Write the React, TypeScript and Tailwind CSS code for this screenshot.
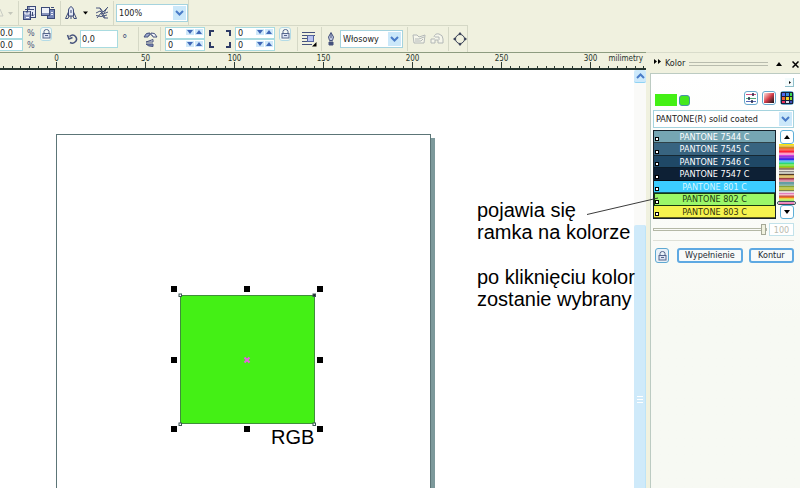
import React, { useState } from 'react';

const swatches = [
  { name: 'PANTONE 7544 C', row: 'bg-[#76a6b3] text-white' },
  { name: 'PANTONE 7545 C', row: 'bg-[#386480] text-white' },
  { name: 'PANTONE 7546 C', row: 'bg-[#1f4866] text-white' },
  { name: 'PANTONE 7547 C', row: 'bg-[#0d2035] text-white' },
  { name: 'PANTONE 801 C', row: 'bg-[#3bcdff] text-[#d6f6ff]' },
  { name: 'PANTONE 802 C', row: 'bg-[#9bf768] text-[#1c3a10]' },
  { name: 'PANTONE 803 C', row: 'bg-[#f5f34e] text-[#33330c]' },
];

const stripColors = [
  '#f5e60a', '#e8b820', '#c88a28', '#f06a20', '#f23a2a', '#ff2038', '#f6406a', '#ff9bd0', '#d040e0', '#7a18c8',
  '#5a10e0', '#2a30f0', '#3a90f0', '#40d8c0', '#30d870', '#60e040', '#80d820', '#a8b020', '#604030', '#e8e4d8',
  '#807878', '#d8d8cc', '#503828', '#c8a040', '#e0c060', '#a04040', '#b83860', '#d8a0a8', '#60a0a0', '#3c8088',
  '#90b8a0', '#88a030', '#a8b828', '#c8c840', '#707840', '#e8e8e0', '#e080c0', '#f8b0d0', '#c04030', '#f07820',
  '#e8d020', '#a0f060', '#40f040', '#f070c0', '#ff3080',
];

const rulerMarks = [0, 50, 100, 150, 200, 250, 300];

const Chevron: React.FC<{ up?: boolean }> = ({ up }) => (
  <svg width="9" height="6" viewBox="0 0 9 6" fill="none" stroke="#4a7cc8" strokeWidth="2">
    <path d={up ? 'M1 5 4.500 1.500 8 5' : 'M1 1 4.500 4.500 8 1'} />
  </svg>
);

const Sep: React.FC = () => <div className="h-6 w-px shrink-0 bg-[#d5d8c6]" />;

const Combo: React.FC<{ label: string; value: string; className: string }> = ({ label, value, className }) => (
  <div className={`relative flex h-[18px] shrink-0 border border-[#a5d3de] bg-white ${className}`}>
    <select aria-label={label} className="w-full appearance-none bg-transparent pl-0.5 leading-4 outline-none">
      <option>{value}</option>
    </select>
    <span className="pointer-events-none absolute inset-y-px right-px flex w-[13px] items-center justify-center bg-[#cbe8fa]">
      <Chevron />
    </span>
  </div>
);

const Arrow: React.FC<{ up?: boolean }> = ({ up }) => (
  <button aria-label={up ? 'Więcej' : 'Mniej'} className="flex h-[6px] w-[8px] items-center justify-center bg-[#cfe8fa]">
    <svg width="6" height="4" viewBox="0 0 6 4" fill="#4068b8">
      <path d={up ? 'M0 4 3 0 6 4z' : 'M0 0 3 4 6 0z'} />
    </svg>
  </button>
);

const Spin: React.FC<{ label: string }> = ({ label }) => (
  <div className="flex h-3 w-10 border border-[#a9dbe0] bg-white">
    <input aria-label={label} defaultValue="0" className="w-5 min-w-0 pl-0.5 leading-[10px] outline-none" />
    <div className="flex gap-px pt-px">
      <Arrow />
      <Arrow up />
    </div>
  </div>
);

const SpinPair: React.FC<{ label: string }> = ({ label }) => (
  <div className="flex shrink-0 flex-col">
    <Spin label={`${label} 1`} />
    <Spin label={`${label} 2`} />
  </div>
);

const LockIcon: React.FC = () => (
  <svg width="9" height="10" viewBox="0 0 9 10" fill="none" stroke="#56668c">
    <path d="M2 4.500V2.500Q2 .5 4.500 .5T7 2.500V4.500" />
    <rect x="1" y="4.500" width="7" height="4.500" fill="#dfe5f4" />
    <path d="M3 6.500h3" />
  </svg>
);

const LockButton: React.FC = () => (
  <button aria-label="Blokada" className="flex h-[14px] w-3 shrink-0 items-center justify-center self-start rounded-[3px] border border-[#b4dbe6] bg-[#f4f9f5]">
    <LockIcon />
  </button>
);

const TopBar: React.FC = () => (
  <div className="flex h-[25px] w-[189px] items-center border-r border-[#d5d8c6]">
    <svg width="14" height="14" viewBox="0 0 14 14" fill="none" className="shrink-0">
      <path d="M0 3 3 10H0" stroke="#c9ccc4" />
      <path d="M8 6h5l-2.500 3z" fill="#c4c7bb" />
    </svg>
    <div className="ml-1 mr-1">
      <Sep />
    </div>
    <button aria-label="Importuj" className="shrink-0">
      <svg width="14" height="14" viewBox="0 0 14 14" fill="none" stroke="#3c4a78">
        <rect x="4.500" y=".5" width="8" height="11" fill="#e5eaf6" />
        <path d="M6 3.500h5M9.500 6v4M8 8.500l1.500 1.500L11 8.500" />
        <rect x=".5" y="5.500" width="7" height="8" fill="#8894bd" />
        <path d="M2 5.500V8h4V5.500M3 11.500h3" stroke="#fff" />
        <path d="M2 3.500h4V1" />
      </svg>
    </button>
    <button aria-label="Eksportuj" className="ml-1 shrink-0">
      <svg width="15" height="14" viewBox="0 0 15 14" fill="none" stroke="#3c4a78">
        <rect x="6.500" y="3.500" width="7" height="9" fill="#7686b8" />
        <path d="M10 6.500h2M10 8.500h2" stroke="#eef1f8" />
        <rect x=".5" y="1.500" width="8" height="8" fill="#eef1f8" />
        <path d="M1 8h7" stroke="#8894bd" strokeWidth="2" />
        <path d="M10 1.500h3" />
      </svg>
    </button>
    <div className="ml-1 mr-1">
      <Sep />
    </div>
    <button aria-label="Uruchom" className="flex shrink-0 items-center gap-1.5">
      <svg width="12" height="14" viewBox="0 0 12 14" fill="none" stroke="#3c4a78">
        <path d="M3.500 10V4Q3.500 2 6 .5 8.500 2 8.500 4v6z" fill="#e3e8f5" />
        <path d="M3.500 6 .5 12.500H3l1-2.500M8.500 6l3 6.500H9L8 10M6 4v3M6 10v3" />
      </svg>
      <svg width="6" height="4" viewBox="0 0 6 4">
        <path d="M0 .5h5L2.500 3.500z" />
      </svg>
    </button>
    <button aria-label="Corel w sieci" className="ml-1.5 shrink-0">
      <svg width="14" height="14" viewBox="0 0 14 14" fill="none" stroke="#4a567e">
        <path d="M1 2h4l3 4 5-5M1 7l4-2 3 3 5-2M2 12l4-5 3 5h4M5 2l5 10M12 2 9 7M1 9.500l5 1 6-1.500" />
      </svg>
    </button>
    <div className="ml-1 mr-0.5">
      <Sep />
    </div>
    <Combo label="Powiększenie" value="100%" className="w-[72px]" />
  </div>
);

const PropertyBar: React.FC = () => (
  <div className="flex h-[27px] w-[468px] items-center border-r border-t border-[#d5d8c6]">
    <div className="flex shrink-0 flex-col">
      {['Skala pozioma', 'Skala pionowa'].map((l) => (
        <input key={l} aria-label={l} defaultValue="0.0" className="h-3 w-[23px] border border-l-0 border-[#a9dbe0] bg-white leading-[10px] outline-none" />
      ))}
    </div>
    <div className="ml-1 flex w-[13px] shrink-0 flex-col leading-3 text-[#4a567e]">
      <span>%</span>
      <span>%</span>
    </div>
    <div className="flex h-6 w-6 shrink-0">
      <LockButton />
    </div>
    <div className="flex shrink-0 items-center">
      <svg width="16" height="12" viewBox="0 0 16 12" fill="none" stroke="#46527c" strokeWidth="1.500">
        <path d="M5.500 3.500Q9 .5 11.500 3.500T11 9Q9 11 6 9.500M3.500 2l1.500 4 3.500-1.500" />
      </svg>
      <input aria-label="Kąt obrotu" defaultValue="0,0" className="h-[18px] w-[38px] border border-[#a9dbe0] bg-white pl-px outline-none" />
      <span className="ml-1 w-4 text-[12px] text-[#4a567e]">°</span>
    </div>
    <Sep />
    <svg width="15" height="20" viewBox="0 0 15 20" className="ml-1 shrink-0" stroke="#46527c">
      <path d="M1 8q2-5 6-4v2q-2 0-2 2z" fill="#9aa6cc" />
      <path d="M14 8Q12 3 8 4v2q2 0 2 2z" fill="#eef1f8" />
      <path d="M3 13l7-2.500V13z" fill="#eef1f8" />
      <path d="M3 15h7v2.500q-5 0-7-2.500z" fill="#7a89ba" />
    </svg>
    <div className="ml-0.5 mr-1">
      <Sep />
    </div>
    <SpinPair label="Zaokrąglenie lewe" />
    <svg width="22" height="18" viewBox="0 0 22 18" fill="none" stroke="#2e3b66" strokeWidth="2" className="mx-1 shrink-0">
      <path d="M1 6V1h4M17 1h4v5M1 12v5h4M17 17h4v-5" />
    </svg>
    <SpinPair label="Zaokrąglenie prawe" />
    <div className="ml-1 flex h-6 w-[18px] shrink-0">
      <LockButton />
    </div>
    <Sep />
    <button aria-label="Oblewanie tekstem" className="mx-1 shrink-0">
      <svg width="15" height="16" viewBox="0 0 15 16" stroke="#46527c">
        <path d="M0 1.500h13M0 4.500h5M0 7.500h5M0 10.500h5M0 13.500h10M11 4.500h2" />
        <rect x="5.500" y="4.500" width="6" height="6" fill="#b8c3f0" stroke="#5565a0" />
        <path d="M14.500 11v4.500H10z" fill="#000" stroke="none" />
      </svg>
    </button>
    <Sep />
    <svg width="10" height="14" viewBox="0 0 10 14" stroke="#46527c" className="mx-1 shrink-0">
      <path d="M5 .5 7.500 5 6.500 8.500h-3L2.500 5z" fill="#c3cbe4" />
      <path d="M5 1v5" />
      <path d="M3 10h4v3H3z" fill="#46527c" />
    </svg>
    <Combo label="Grubość konturu" value="Włosowy" className="w-[63px]" />
    <div className="ml-1 mr-1">
      <Sep />
    </div>
    <div className="flex shrink-0 gap-1 opacity-40">
      <svg width="14" height="12" viewBox="0 0 14 12" fill="#fff" stroke="#59637c">
        <path d="M1 2h4l2 2 6-2-1 8H2z" />
        <path d="M3 6h4l5-2M3 8h6l2-2" />
      </svg>
      <svg width="14" height="12" viewBox="0 0 14 12" fill="#fff" stroke="#59637c">
        <path d="M4 4q1-4 5-3t4 5v4H8V7H5v3H1V6h4" />
        <path d="M5 4h4v3" />
      </svg>
    </div>
    <div className="ml-1 mr-1">
      <Sep />
    </div>
    <button aria-label="Konwertuj na krzywe" className="shrink-0">
      <svg width="14" height="14" viewBox="0 0 14 14" fill="none" stroke="#3a4258">
        <circle cx="7" cy="7" r="4.500" />
        <path d="M7 0l2 2.500H5zM7 14l2-2.500H5zM0 7l2.500-2v4zM14 7l-2.500-2v4z" fill="#3a4258" stroke="none" />
      </svg>
    </button>
  </div>
);

const Ruler: React.FC = () => (
  <div className="h-[18px] overflow-hidden border-b-2 border-t border-b-[#26352f] border-t-[#8d9c80]">
    <svg width="646" height="15" viewBox="0 0 646 15" stroke="#2e3c34" fill="#26332c">
      {Array.from({ length: 73 }, (_, i) => (
        <path key={i} d={`M${Math.round(56 + (i - 6) * 8.9) + 0.5} 13v2`} />
      ))}
      {rulerMarks.map((m) => (
        <g key={m}>
          <path d={`M${Math.round(56 + m * 1.78) + 0.5} 9v6`} />
          <text x={56.5 + m * 1.78} y="8" textAnchor="middle" fontSize="8" stroke="none">{m}</text>
        </g>
      ))}
      <text x="643" y="8" textAnchor="end" fontSize="8" stroke="none">milimetry</text>
    </svg>
  </div>
);

const handles = [
  'left-[171px] top-[216px]', 'left-[244px] top-[216px]', 'left-[317px] top-[216px]',
  'left-[171px] top-[287px]', 'left-[317px] top-[287px]',
  'left-[171px] top-[356px]', 'left-[244px] top-[356px]', 'left-[317px] top-[356px]',
];

const Canvas: React.FC = () => (
  <div className="relative flex-1 bg-white">
    <div className="absolute bottom-0 left-[431px] top-[68px] w-[4px] bg-[#7d999b]" />
    <div className="absolute bottom-0 left-[56px] top-[64px] w-[375px] border border-b-0 border-[#5c7577] bg-white" />
    <div className="absolute left-[180px] top-[225px] h-[129px] w-[135px] border border-[#3f8f3a] bg-[#44f015]" />
    {handles.map((h) => (
      <div key={h} className={`absolute size-1.5 bg-black ${h}`} />
    ))}
    <svg width="140" height="134" viewBox="0 0 140 134" className="absolute left-[178px] top-[223px]" fill="#fff" stroke="#3c5456">
      <rect x="1" y="1" width="2.500" height="2.500" />
      <rect x="135" y="1" width="2.500" height="2.500" fill="#222" />
      <rect x="1" y="130" width="2.500" height="2.500" />
      <rect x="135" y="130" width="2.500" height="2.500" />
      <path d="M66.500 64.500l5 5M71.500 64.500l-5 5" stroke="#e660e0" strokeWidth="2" />
    </svg>
    <p className="absolute left-[271px] top-[356px] text-[20px] leading-[22px]">RGB</p>
    <div className="absolute left-[477px] top-[129px] z-10 whitespace-nowrap text-[20px] leading-[22px]">
      <p>pojawia się<br />ramka na kolorze</p>
      <p className="mt-[23px]">po kliknięciu kolor<br />zostanie wybrany</p>
    </div>
    <svg width="72" height="20" viewBox="0 0 72 20" className="absolute left-[587px] top-[126px] z-20" stroke="#3b3b3b">
      <path d="M0 18.500 71 2" />
    </svg>
  </div>
);

const ScrollBar: React.FC = () => (
  <div className="flex w-3 flex-col bg-[#fafaf8]">
    <button aria-label="W górę" className="flex h-[13px] items-center justify-center rounded-[2px] border-b border-[#8fd3f4] bg-[#cde9fb]">
      <Chevron up />
    </button>
    <div className="h-[142px]" />
    <div className="flex flex-1 items-center justify-center rounded-t-[2px] border-r border-[#bde4f8] bg-[#cfeafa]">
      <div className="mt-[86px] flex w-[6px] flex-col gap-0.5">
        <div className="h-px bg-white" />
        <div className="h-px bg-white" />
        <div className="h-px bg-white" />
      </div>
    </div>
  </div>
);

const modeButton = 'flex size-[14px] items-center justify-center rounded-[3px] border border-[#68a8cc] bg-white';
const xpButton = 'flex items-center justify-center rounded-[3px] border-2 border-[#5ea9e2] bg-[#f8fafa] text-[#1d2b33]';

const ColorDocker: React.FC = () => {
  const [selected, setSelected] = useState('PANTONE 802 C');
  const [tint, setTint] = useState(100);

  return (
    <aside className="flex w-[154px] shrink-0 flex-col border-t border-[#d9dccb] pl-1">
      <header className="flex h-5 items-center gap-1 pl-1 pr-px pt-0.5">
        <svg width="7" height="5" viewBox="0 0 7 5" className="-mt-1.5 shrink-0">
          <path d="M0 0l3 2.500L0 5zM4 0l3 2.500L4 5z" />
        </svg>
        <h2>Kolor</h2>
        <div className="h-[4px] flex-1 border-y border-[#b9bcae]" />
        <button aria-label="Zwiń" className="pl-1 pr-0.5">
          <svg width="6" height="4" viewBox="0 0 6 4"><path d="M0 4l3-4 3 4z" /></svg>
        </button>
        <button aria-label="Zamknij" className="pl-1">
          <svg width="7" height="7" viewBox="0 0 7 7" stroke="#000" strokeWidth="1.500"><path d="M.5 .5l6 6M6.500 .5l-6 6" /></svg>
        </button>
      </header>

      <div className="flex flex-1 flex-col border-l border-t border-[#bccbc2] bg-gradient-to-b from-white to-[#f7f9f3] to-60% pl-0.5 pr-1.5">
        <div className="flex justify-end pt-1">
          <button aria-label="Opcje" className="flex size-[9px] items-center justify-center border-b border-r border-[#8fbfcb] bg-[#f4fbfc]">
            <svg width="3" height="3" viewBox="0 0 3 3"><path d="M1 0l2 1.500L1 3z" /></svg>
          </button>
        </div>
        <div className="mt-[3px] flex items-center gap-1">
          <div className="mt-1 flex flex-1 items-center gap-0.5 pl-0.5">
            <div className="h-3 w-[22px] bg-[#44f015]" />
            <button aria-label="Kolor bieżący" className="size-[11px] rounded-[3px] border border-[#4791a8] bg-[#44e81c]" />
          </div>
          <button aria-label="Suwaki kolorów" className={modeButton}>
            <svg width="12" height="12" viewBox="0 0 12 12" fill="none">
              <path d="M1 2.500h10" stroke="#d05080" />
              <path d="M1 6.500h10" stroke="#52a878" />
              <path d="M1 9.500h10" stroke="#5868b8" />
              <path d="M8 1v3M4 5v3M7 8v3" stroke="#222a44" strokeWidth="1.500" />
            </svg>
          </button>
          <button aria-label="Przeglądarki kolorów" className={modeButton}>
            <span className="size-[10px] bg-gradient-to-br from-[#f8dce0] via-[#d53b4a] to-[#151015]" />
          </button>
          <button aria-label="Palety kolorów" className={modeButton}>
            <svg width="12" height="12" viewBox="0 0 12 12">
              <rect width="12" height="12" fill="#18203a" />
              <path d="M1 1h3v3H1z" fill="#5068f0" />
              <path d="M5 1h3v3H5z" fill="#3890e0" />
              <path d="M9 1h2v3H9z" fill="#38d850" />
              <path d="M1 5h3v3H1z" fill="#f06030" />
              <path d="M5 5h3v3H5z" fill="#f0d820" />
              <path d="M9 5h2v3H9z" fill="#88e030" />
              <path d="M1 9h3v2H1z" fill="#f03060" />
              <path d="M5 9h3v2H5z" fill="#e0e0f0" />
              <path d="M9 9h2v2H9z" fill="#4050c0" />
            </svg>
          </button>
        </div>

        <div className="mt-1 flex flex-col">
          <Combo label="Paleta" value="PANTONE(R) solid coated" className="w-full" />
        </div>

        <div className="mt-0.5 flex gap-[3px]">
          <ul className="grid h-[89px] flex-1 auto-rows-fr border border-[#16222b]">
            {swatches.map((s) => (
              <li key={s.name} className="flex min-h-0">
                <button
                  onClick={() => setSelected(s.name)}
                  className={`relative w-full overflow-hidden border-b border-black/60 leading-3 ${s.row} ${selected === s.name ? 'outline -outline-offset-1 outline-[#173a10]' : ''}`}
                >
                  {s.name}
                  <span className="absolute bottom-px left-px size-1 border border-black bg-white" />
                </button>
              </li>
            ))}
          </ul>
          <div className="flex w-[15px] flex-col items-center">
            <button aria-label="Poprzednie" className="flex size-[14px] shrink-0 items-center justify-center rounded-[3px] border border-[#5eb0d8] bg-white">
              <svg width="6" height="4" viewBox="0 0 6 4"><path d="M0 4l3-4 3 4z" /></svg>
            </button>
            <div className="relative w-full flex-1">
              <svg width="100%" height="100%" viewBox="0 0 15 45" preserveAspectRatio="none" className="absolute inset-0">
                {stripColors.map((c, i) => (
                  <rect key={i} y={i} width="15" height="1" fill={c} />
                ))}
              </svg>
              <div className="absolute -inset-x-0.5 bottom-0 h-[4px] rounded-[2px] border border-[#3b4d55]" />
            </div>
            <button aria-label="Następne" className="flex size-[14px] shrink-0 items-center justify-center rounded-[3px] border border-[#5eb0d8] bg-white">
              <svg width="6" height="4" viewBox="0 0 6 4"><path d="M0 0l3 4 3-4z" /></svg>
            </button>
          </div>
        </div>

        <div className="mt-1 flex items-center gap-0.5 border-b border-[#dfe1d8] pb-1">
          <input
            type="range"
            aria-label="Odcień"
            value={tint}
            onChange={(e) => setTint(Number(e.target.value))}
            className="h-3 min-w-0 flex-1 appearance-none bg-transparent [&::-webkit-slider-runnable-track]:h-[3px] [&::-webkit-slider-runnable-track]:border [&::-webkit-slider-runnable-track]:border-[#b4b8a6] [&::-webkit-slider-thumb]:-mt-[5px] [&::-webkit-slider-thumb]:h-[11px] [&::-webkit-slider-thumb]:w-[5px] [&::-webkit-slider-thumb]:appearance-none [&::-webkit-slider-thumb]:border [&::-webkit-slider-thumb]:border-[#a5a997] [&::-webkit-slider-thumb]:bg-[#f0f1df]"
          />
          <input
            aria-label="Odcień w procentach"
            value={tint}
            onChange={(e) => setTint(Number(e.target.value) || 0)}
            className="h-[13px] w-[25px] border border-[#c2e2ea] bg-white text-center leading-[11px] text-[#b9bbae] outline-none"
          />
        </div>

        <div className="mt-[7px] flex items-center gap-1.5">
          <button aria-label="Aktualizuj automatycznie" className="ml-0.5 mr-0.5 flex h-[15px] w-[14px] items-center justify-center rounded-[3px] border border-[#5ea9d2] bg-[#e9f1f8]">
            <LockIcon />
          </button>
          <button className={`h-[15px] flex-[3] ${xpButton}`}>Wypełnienie</button>
          <button className={`h-[15px] flex-[2] ${xpButton}`}>Kontur</button>
        </div>
      </div>
    </aside>
  );
};

const App: React.FC = () => (
  <div className="flex min-h-screen flex-col overflow-hidden bg-[#f0f1df] font-['DejaVu_Sans_Condensed','DejaVu_Sans',sans-serif] text-[9px] text-[#1c2422]">
    <TopBar />
    <PropertyBar />
    <main className="flex flex-1">
      <div className="flex min-w-0 flex-1 flex-col">
        <Ruler />
        <div className="flex flex-1 font-['Liberation_Sans',Arial,sans-serif] text-black">
          <Canvas />
          <ScrollBar />
        </div>
      </div>
      <ColorDocker />
    </main>
  </div>
);

export default App;
